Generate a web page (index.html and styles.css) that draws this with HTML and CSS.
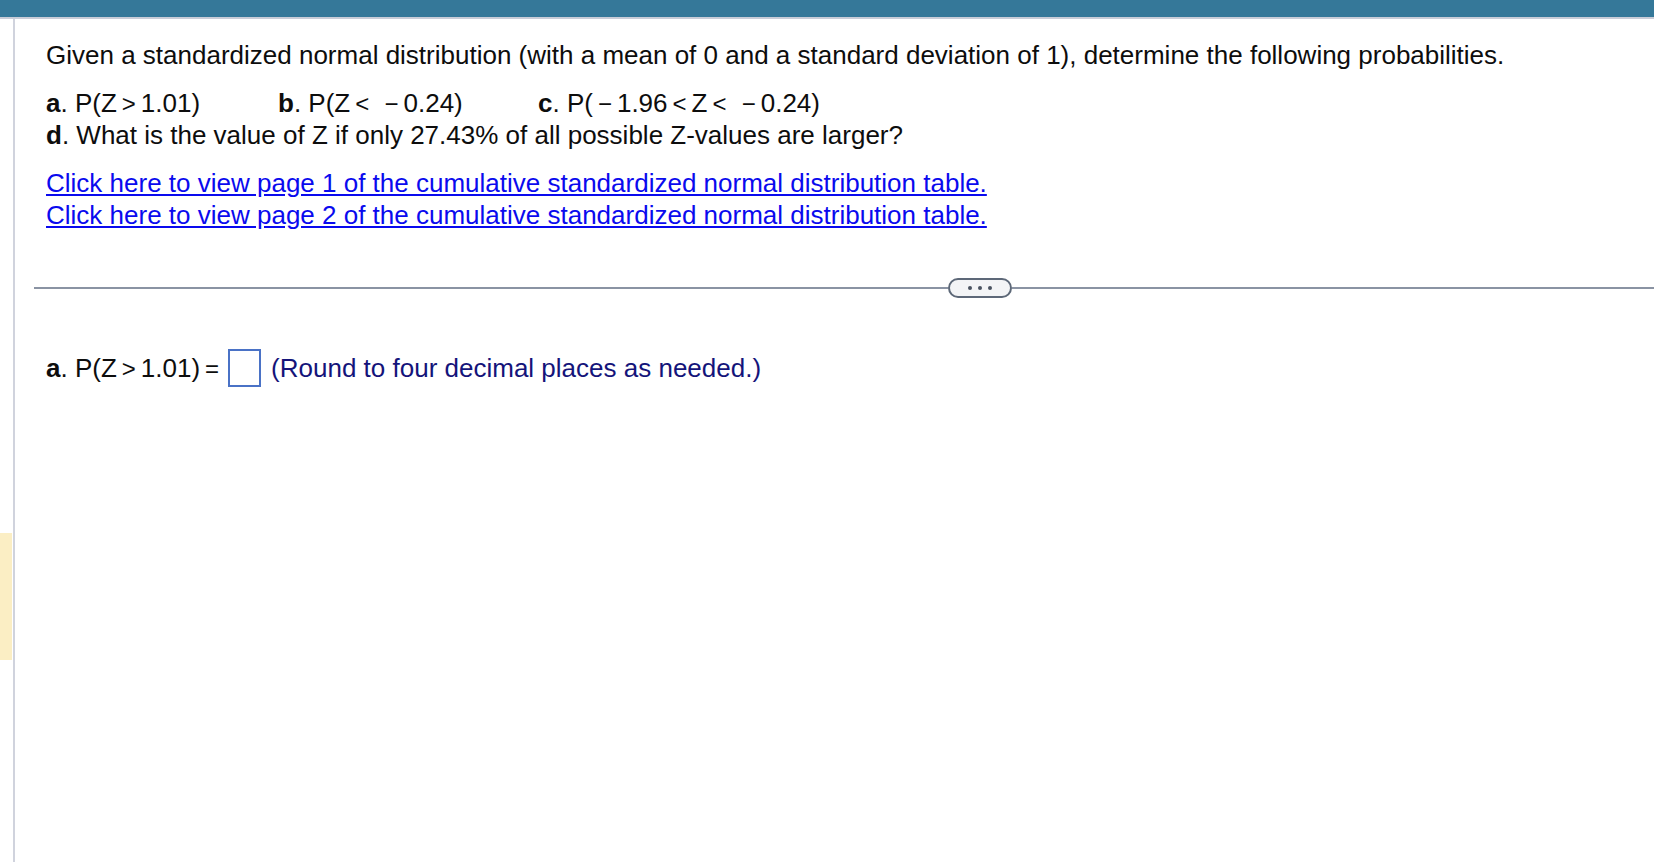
FILE: index.html
```html
<!DOCTYPE html>
<html lang="en">
<head>
<meta charset="utf-8">
<title>Standardized normal distribution</title>
<link rel="stylesheet" href="styles.css">
</head>
<body>
<div class="topbar"></div>
<div class="page">
  <div class="gutter">
    <div class="highlight"></div>
  </div>
  <main class="main">
    <section class="question">
      <p class="para">Given a standardized normal distribution (with a mean of 0 and a standard deviation of 1), determine the following probabilities.</p>
      <div class="para">
        <div class="parts">
          <span class="part"><b>a</b>. P(Z<span class="op">&gt;</span>1.01)</span>
          <span class="part"><b>b</b>. P(Z<span class="op">&lt;</span>&thinsp;<span class="op">&minus;</span>0.24)</span>
          <span class="part"><b>c</b>. P(<span class="op">&minus;</span>1.96<span class="op">&lt;</span>Z<span class="op">&lt;</span>&thinsp;<span class="op">&minus;</span>0.24)</span>
        </div>
        <div><b>d</b>. What is the value of Z if only 27.43% of all possible Z-values are larger?</div>
      </div>
      <div class="links">
        <a href="#" class="link">Click here to view page 1 of the cumulative standardized normal distribution table.</a>
        <a href="#" class="link">Click here to view page 2 of the cumulative standardized normal distribution table.</a>
      </div>
    </section>
    <div class="separator">
      <div class="sep-line sep-left"></div>
      <button class="more" type="button" aria-label="More"><span class="dot"></span><span class="dot"></span><span class="dot"></span></button>
      <div class="sep-line sep-right"></div>
    </div>
    <section class="answer">
      <span><b>a</b>. P(Z<span class="op">&gt;</span>1.01)<span class="op">=</span></span>
      <span class="input-box"></span>
      <span class="hint">(Round to four decimal places as needed.)</span>
    </section>
  </main>
</div>
</body>
</html>
```

FILE: styles.css
```css
html, body {
  margin: 0;
  padding: 0;
  background: #ffffff;
}

body {
  font-family: "Liberation Sans", Arial, sans-serif;
  font-size: 26px;
  line-height: 32px;
  color: #0d0d0d;
  overflow: hidden;
}

.topbar {
  height: 17px;
  background: #357899;
  border-bottom: 2px solid #c9cdd8;
}

.page {
  display: flex;
  min-height: 843px;
}

.gutter {
  width: 13px;
  flex: 0 0 13px;
  border-right: 2px solid #d0d3dd;
}

.highlight {
  margin-top: 514px;
  height: 127px;
  width: 12px;
  background: #fbeec4;
}

.main {
  flex: 1;
  padding-left: 19px;
  padding-top: 20px;
}

.question {
  padding-left: 12px;
}

.para {
  margin: 0 0 16px 0;
}

.parts {
  display: grid;
  grid-template-columns: 232px 260px auto;
}

.op {
  margin: 0 5px;
  font-size: 24px;
  line-height: 1;
}

.links {
  display: flex;
  flex-direction: column;
}

.link {
  color: #0a0aee;
  text-decoration: underline;
  text-underline-offset: 2px;
  align-self: flex-start;
}

.separator {
  display: flex;
  align-items: center;
  height: 20px;
  margin-top: 47px;
}

.sep-line {
  height: 2px;
  background: #8a93a3;
}

.sep-left {
  width: 914px;
}

.sep-right {
  flex: 1;
}

.more {
  width: 64px;
  height: 20px;
  box-sizing: border-box;
  border: 2px solid #5d6878;
  border-radius: 10px;
  background: #f3f4f6;
  display: flex;
  align-items: center;
  justify-content: center;
  gap: 6px;
  padding: 0;
}

.dot {
  width: 4px;
  height: 4px;
  border-radius: 50%;
  background: #4a5260;
}

.answer {
  display: flex;
  align-items: center;
  margin-top: 51px;
  padding-left: 12px;
}

.input-box {
  width: 33px;
  height: 38px;
  box-sizing: border-box;
  border: 2px solid #4a72c6;
  margin-left: 4px;
  margin-right: 10px;
}

.hint {
  color: #14147a;
}
```
